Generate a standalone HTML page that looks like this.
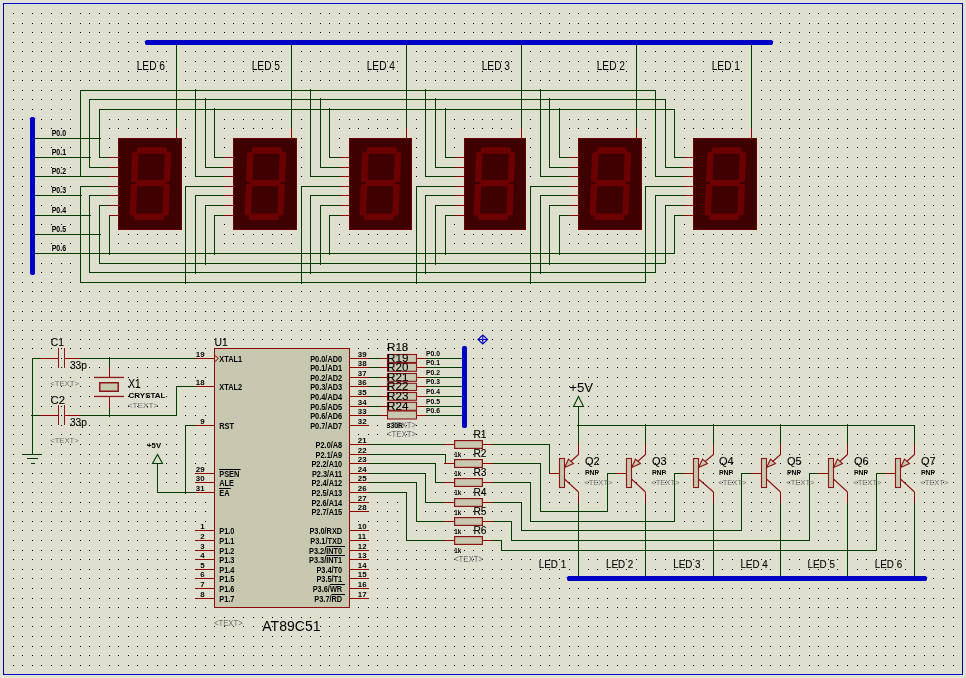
<!DOCTYPE html><html><head><meta charset="utf-8"><style>
html,body{margin:0;padding:0;background:#e2e2d6;overflow:hidden}
svg{display:block;font-family:"Liberation Sans",sans-serif;will-change:transform}
</style></head><body>
<svg width="966" height="678" viewBox="0 0 966 678">
<rect x="0" y="0" width="966" height="678" fill="#e2e2d6"/>
<rect x="4" y="4" width="958" height="670" fill="#dfdfd0"/>
<defs><path id="dr" d="M13 .5h1m8 0h1m9 0h1m8 0h1m9 0h1m9 0h1m8 0h1m9 0h1m8 0h1m9 0h1m9 0h1m8 0h1m9 0h1m8 0h1m9 0h1m9 0h1m8 0h1m9 0h1m8 0h1m9 0h1m9 0h1m8 0h1m9 0h1m8 0h1m9 0h1m9 0h1m8 0h1m9 0h1m8 0h1m9 0h1m9 0h1m8 0h1m9 0h1m8 0h1m9 0h1m9 0h1m8 0h1m9 0h1m8 0h1m9 0h1m9 0h1m8 0h1m9 0h1m8 0h1m9 0h1m9 0h1m8 0h1m9 0h1m8 0h1m8 0h1m9 0h1m8 0h1m9 0h1m9 0h1m8 0h1m9 0h1m8 0h1m9 0h1m9 0h1m8 0h1m9 0h1m8 0h1m9 0h1m9 0h1m8 0h1m9 0h1m8 0h1m9 0h1m9 0h1m8 0h1m9 0h1m8 0h1m9 0h1m9 0h1m8 0h1m9 0h1m8 0h1m9 0h1m9 0h1m8 0h1m9 0h1m8 0h1m9 0h1m9 0h1m8 0h1m9 0h1m8 0h1m9 0h1m9 0h1m8 0h1m9 0h1m8 0h1m9 0h1m9 0h1m8 0h1m9 0h1m8 0h1m9 0h1m9 0h1" stroke="#000" stroke-width="1" fill="none"/></defs><g shape-rendering="crispEdges"><use href="#dr" y="13"/><use href="#dr" y="23"/><use href="#dr" y="32"/><use href="#dr" y="42"/><use href="#dr" y="51"/><use href="#dr" y="61"/><use href="#dr" y="71"/><use href="#dr" y="80"/><use href="#dr" y="90"/><use href="#dr" y="99"/><use href="#dr" y="109"/><use href="#dr" y="119"/><use href="#dr" y="128"/><use href="#dr" y="138"/><use href="#dr" y="147"/><use href="#dr" y="157"/><use href="#dr" y="167"/><use href="#dr" y="176"/><use href="#dr" y="186"/><use href="#dr" y="195"/><use href="#dr" y="205"/><use href="#dr" y="215"/><use href="#dr" y="224"/><use href="#dr" y="234"/><use href="#dr" y="243"/><use href="#dr" y="253"/><use href="#dr" y="263"/><use href="#dr" y="272"/><use href="#dr" y="282"/><use href="#dr" y="291"/><use href="#dr" y="301"/><use href="#dr" y="311"/><use href="#dr" y="320"/><use href="#dr" y="330"/><use href="#dr" y="339"/><use href="#dr" y="348"/><use href="#dr" y="358"/><use href="#dr" y="367"/><use href="#dr" y="377"/><use href="#dr" y="386"/><use href="#dr" y="396"/><use href="#dr" y="406"/><use href="#dr" y="415"/><use href="#dr" y="425"/><use href="#dr" y="434"/><use href="#dr" y="444"/><use href="#dr" y="454"/><use href="#dr" y="463"/><use href="#dr" y="473"/><use href="#dr" y="482"/><use href="#dr" y="492"/><use href="#dr" y="502"/><use href="#dr" y="511"/><use href="#dr" y="521"/><use href="#dr" y="530"/><use href="#dr" y="540"/><use href="#dr" y="550"/><use href="#dr" y="559"/><use href="#dr" y="569"/><use href="#dr" y="578"/><use href="#dr" y="588"/><use href="#dr" y="598"/><use href="#dr" y="607"/><use href="#dr" y="617"/><use href="#dr" y="626"/><use href="#dr" y="636"/><use href="#dr" y="646"/><use href="#dr" y="655"/><use href="#dr" y="665"/></g>
<g shape-rendering="crispEdges"><rect x="3" y="3" width="960" height="1" fill="#0000c8"/><rect x="3" y="674" width="960" height="1" fill="#0000c8"/><rect x="3" y="3" width="1" height="672" fill="#000098"/><rect x="962" y="3" width="1" height="672" fill="#000098"/></g>
<path d="M80 90.5H656M89 99.5H666M99 109.5H675M34 253.5H675M99 263.5H666M89 272.5H656M80 282.5H646M34 138.5H101M34 157.5H91M34 176.5H110M34 195.5H82M34 215.5H91M34 234.5H101M176.5 45V128M99.5 109V158M99 157.5H109M89.5 99V168M89 167.5H109M80.5 90V177M80.5 186V283M80 186.5H109M89.5 195V273M89 195.5H109M99.5 205V264M99 205.5H109M109.5 215V255M291.5 45V128M195.5 89V177M195 176.5H224M205.5 98V168M205 167.5H224M214.5 108V158M214 157.5H224M185.5 186V284M185 186.5H224M195.5 195V274M195 195.5H224M205.5 205V265M205 205.5H224M214.5 215V255M214 215.5H224M406.5 45V128M310.5 89V177M310 176.5H340M320.5 98V168M320 167.5H340M329.5 108V158M329 157.5H340M301.5 186V284M301 186.5H340M310.5 195V274M310 195.5H340M320.5 205V265M320 205.5H340M329.5 215V255M329 215.5H340M521.5 45V128M425.5 89V177M425 176.5H455M435.5 98V168M435 167.5H455M445.5 108V158M445 157.5H455M416.5 186V284M416 186.5H455M425.5 195V274M425 195.5H455M435.5 205V265M435 205.5H455M445.5 215V255M445 215.5H455M636.5 45V128M540.5 89V177M540 176.5H569M549.5 98V168M549 167.5H569M559.5 108V158M559 157.5H569M530.5 186V284M530 186.5H569M540.5 195V274M540 195.5H569M549.5 205V265M549 205.5H569M559.5 215V255M559 215.5H569M751.5 45V128M655.5 90V177M655 176.5H684M665.5 99V168M665 167.5H684M674.5 109V158M674 157.5H684M645.5 186V283M645 186.5H684M655.5 195V273M655 195.5H684M665.5 205V264M665 205.5H684M674.5 215V254M674 215.5H684M32.5 358V455M22 454.5H42M27 458.5H38M31 463.5H35M32 358.5H40M31 415.5H40M80 358.5H196M80 415.5H177M176.5 386V416M176 386.5H196M109.5 357V367M109.5 408V417M157.5 463V493M157 492.5H196M185 425.5H196M185.5 425V494M369 358.5H380M426 358.5H464M369 367.5H380M426 367.5H464M369 377.5H380M426 377.5H464M369 386.5H380M426 386.5H464M369 396.5H380M426 396.5H464M369 406.5H380M426 406.5H464M369 415.5H380M426 415.5H464M369 444.5H444M369 454.5H446M445.5 454V464M369 463.5H436M435.5 463V483M435 482.5H444M369 473.5H426M425.5 473V503M425 502.5H444M369 482.5H417M416.5 482V522M416 521.5H444M369 492.5H407M406.5 492V541M406 540.5H444M493 444.5H550M549.5 444V474M493 463.5H541M540.5 463V512M540 511.5H608M607.5 473V512M493 482.5H531M530.5 482V522M530 521.5H675M674.5 473V522M493 502.5H522M521.5 502V531M521 530.5H742M741.5 473V531M493 521.5H512M511.5 521V541M511 540.5H810M809.5 473V541M493 540.5H502M501.5 540V551M501 550.5H877M876.5 473V551M578.5 425V444M578.5 503V577M607 473.5H616M645.5 424V444M645.5 503V577M674 473.5H683M713.5 424V444M713.5 503V577M741 473.5H751M780.5 424V444M780.5 503V577M809 473.5H818M847.5 424V444M847.5 503V577M876 473.5H885M914.5 425V444M914.5 503V577M577 425.5H915M578.5 406V426" stroke="#003c00" stroke-width="1" fill="none" shape-rendering="crispEdges"/>
<path d="M109 157.5H118M109 167.5H118M109 176.5H118M109 186.5H118M109 195.5H118M109 205.5H118M109 215.5H118M176.5 128V138M224 157.5H233M224 167.5H233M224 176.5H233M224 186.5H233M224 195.5H233M224 205.5H233M224 215.5H233M291.5 128V138M340 157.5H349M340 167.5H349M340 176.5H349M340 186.5H349M340 195.5H349M340 205.5H349M340 215.5H349M406.5 128V138M455 157.5H464M455 167.5H464M455 176.5H464M455 186.5H464M455 195.5H464M455 205.5H464M455 215.5H464M521.5 128V138M569 157.5H578M569 167.5H578M569 176.5H578M569 186.5H578M569 195.5H578M569 205.5H578M569 215.5H578M636.5 128V138M684 157.5H693M684 167.5H693M684 176.5H693M684 186.5H693M684 195.5H693M684 205.5H693M684 215.5H693M751.5 128V138M40 358.5H58M65 358.5H80M40 415.5H58M65 415.5H80M109.5 367V377M109.5 397V408M195 358.5H214M195 386.5H214M195 425.5H214M195 473.5H214M195 482.5H214M195 492.5H214M195 530.5H214M195 540.5H214M195 550.5H214M195 559.5H214M195 569.5H214M195 578.5H214M195 588.5H214M195 598.5H214M350 358.5H369M350 367.5H369M350 377.5H369M350 386.5H369M350 396.5H369M350 406.5H369M350 415.5H369M350 425.5H369M350 444.5H369M350 454.5H369M350 463.5H369M350 473.5H369M350 482.5H369M350 492.5H369M350 502.5H369M350 511.5H369M350 530.5H369M350 540.5H369M350 550.5H369M350 559.5H369M350 569.5H369M350 578.5H369M350 588.5H369M350 598.5H369M380 358.5H387M417 358.5H426M380 367.5H387M417 367.5H426M380 377.5H387M417 377.5H426M380 386.5H387M417 386.5H426M380 396.5H387M417 396.5H426M380 406.5H387M417 406.5H426M380 415.5H387M417 415.5H426M444 444.5H454M483 444.5H493M444 463.5H454M483 463.5H493M444 482.5H454M483 482.5H493M444 502.5H454M483 502.5H493M444 521.5H454M483 521.5H493M444 540.5H454M483 540.5H493M350 502.5H369M350 511.5H369M549 473.5H559M578.5 444V455M578.5 492V503M616 473.5H626M645.5 444V455M645.5 492V503M683 473.5H693M713.5 444V455M713.5 492V503M751 473.5H761M780.5 444V455M780.5 492V503M818 473.5H828M847.5 444V455M847.5 492V503M885 473.5H895M914.5 444V455M914.5 492V503" stroke="#900000" stroke-width="1" fill="none" shape-rendering="crispEdges"/>
<path d="M58.5 348V368M64.5 348V368M58.5 405V425M64.5 405V425" stroke="#8c1414" stroke-width="1" fill="none" shape-rendering="crispEdges"/>
<rect x="118.5" y="138.5" width="63" height="91" fill="#3e0000" stroke="#680000" stroke-width="1"/><g transform="translate(150.2,183.75) skewX(-2.4) translate(-150.2,-183.75)" fill="#6c0000"><rect x="135.50" y="147.30" width="29.80" height="6.40" rx="1.8"/><rect x="135.50" y="179.80" width="29.80" height="6.50" rx="1.8"/><rect x="135.50" y="213.60" width="29.80" height="6.40" rx="1.8"/><rect x="130.90" y="151.90" width="6.40" height="30.10" rx="1.8"/><rect x="163.50" y="151.90" width="6.40" height="30.10" rx="1.8"/><rect x="130.90" y="184.10" width="6.40" height="31.30" rx="1.8"/><rect x="163.50" y="184.10" width="6.40" height="31.30" rx="1.8"/></g><rect x="233.5" y="138.5" width="63" height="91" fill="#3e0000" stroke="#680000" stroke-width="1"/><g transform="translate(265.2,183.75) skewX(-2.4) translate(-265.2,-183.75)" fill="#6c0000"><rect x="250.50" y="147.30" width="29.80" height="6.40" rx="1.8"/><rect x="250.50" y="179.80" width="29.80" height="6.50" rx="1.8"/><rect x="250.50" y="213.60" width="29.80" height="6.40" rx="1.8"/><rect x="245.90" y="151.90" width="6.40" height="30.10" rx="1.8"/><rect x="278.50" y="151.90" width="6.40" height="30.10" rx="1.8"/><rect x="245.90" y="184.10" width="6.40" height="31.30" rx="1.8"/><rect x="278.50" y="184.10" width="6.40" height="31.30" rx="1.8"/></g><rect x="349.5" y="138.5" width="62" height="91" fill="#3e0000" stroke="#680000" stroke-width="1"/><g transform="translate(380.2,183.75) skewX(-2.4) translate(-380.2,-183.75)" fill="#6c0000"><rect x="365.50" y="147.30" width="29.80" height="6.40" rx="1.8"/><rect x="365.50" y="179.80" width="29.80" height="6.50" rx="1.8"/><rect x="365.50" y="213.60" width="29.80" height="6.40" rx="1.8"/><rect x="360.90" y="151.90" width="6.40" height="30.10" rx="1.8"/><rect x="393.50" y="151.90" width="6.40" height="30.10" rx="1.8"/><rect x="360.90" y="184.10" width="6.40" height="31.30" rx="1.8"/><rect x="393.50" y="184.10" width="6.40" height="31.30" rx="1.8"/></g><rect x="464.5" y="138.5" width="61" height="91" fill="#3e0000" stroke="#680000" stroke-width="1"/><g transform="translate(494.2,183.75) skewX(-2.4) translate(-494.2,-183.75)" fill="#6c0000"><rect x="479.50" y="147.30" width="29.80" height="6.40" rx="1.8"/><rect x="479.50" y="179.80" width="29.80" height="6.50" rx="1.8"/><rect x="479.50" y="213.60" width="29.80" height="6.40" rx="1.8"/><rect x="474.90" y="151.90" width="6.40" height="30.10" rx="1.8"/><rect x="507.50" y="151.90" width="6.40" height="30.10" rx="1.8"/><rect x="474.90" y="184.10" width="6.40" height="31.30" rx="1.8"/><rect x="507.50" y="184.10" width="6.40" height="31.30" rx="1.8"/></g><rect x="578.5" y="138.5" width="63" height="91" fill="#3e0000" stroke="#680000" stroke-width="1"/><g transform="translate(610.2,183.75) skewX(-2.4) translate(-610.2,-183.75)" fill="#6c0000"><rect x="595.50" y="147.30" width="29.80" height="6.40" rx="1.8"/><rect x="595.50" y="179.80" width="29.80" height="6.50" rx="1.8"/><rect x="595.50" y="213.60" width="29.80" height="6.40" rx="1.8"/><rect x="590.90" y="151.90" width="6.40" height="30.10" rx="1.8"/><rect x="623.50" y="151.90" width="6.40" height="30.10" rx="1.8"/><rect x="590.90" y="184.10" width="6.40" height="31.30" rx="1.8"/><rect x="623.50" y="184.10" width="6.40" height="31.30" rx="1.8"/></g><rect x="693.5" y="138.5" width="63" height="91" fill="#3e0000" stroke="#680000" stroke-width="1"/><g transform="translate(725.2,183.75) skewX(-2.4) translate(-725.2,-183.75)" fill="#6c0000"><rect x="710.50" y="147.30" width="29.80" height="6.40" rx="1.8"/><rect x="710.50" y="179.80" width="29.80" height="6.50" rx="1.8"/><rect x="710.50" y="213.60" width="29.80" height="6.40" rx="1.8"/><rect x="705.90" y="151.90" width="6.40" height="30.10" rx="1.8"/><rect x="738.50" y="151.90" width="6.40" height="30.10" rx="1.8"/><rect x="705.90" y="184.10" width="6.40" height="31.30" rx="1.8"/><rect x="738.50" y="184.10" width="6.40" height="31.30" rx="1.8"/></g><path d="M145 41.2L146.2 40H771.8L773 41.2V43.8L771.8 45H146.2L145 43.8Z" fill="#0000c4"/><path d="M31.2 117L30 118.2V273.8L31.2 275H33.8L35 273.8V118.2L33.8 117Z" fill="#0000c4"/><text x="136.70" y="69.9" font-size="12.29" fill="#000" textLength="28.34" lengthAdjust="spacingAndGlyphs" >LED 6</text><text x="251.70" y="69.9" font-size="12.29" fill="#000" textLength="28.34" lengthAdjust="spacingAndGlyphs" >LED 5</text><text x="366.70" y="69.9" font-size="12.29" fill="#000" textLength="28.34" lengthAdjust="spacingAndGlyphs" >LED 4</text><text x="481.70" y="69.9" font-size="12.29" fill="#000" textLength="28.34" lengthAdjust="spacingAndGlyphs" >LED 3</text><text x="596.70" y="69.9" font-size="12.29" fill="#000" textLength="28.34" lengthAdjust="spacingAndGlyphs" >LED 2</text><text x="711.70" y="69.9" font-size="12.29" fill="#000" textLength="28.34" lengthAdjust="spacingAndGlyphs" >LED 1</text><text x="51.70" y="135.5" font-size="8.43" fill="#000" font-weight="bold" textLength="14.38" lengthAdjust="spacingAndGlyphs" >P0.0</text><text x="51.70" y="154.5" font-size="8.43" fill="#000" font-weight="bold" textLength="14.38" lengthAdjust="spacingAndGlyphs" >P0.1</text><text x="51.70" y="173.5" font-size="8.43" fill="#000" font-weight="bold" textLength="14.38" lengthAdjust="spacingAndGlyphs" >P0.2</text><text x="51.70" y="192.5" font-size="8.43" fill="#000" font-weight="bold" textLength="14.38" lengthAdjust="spacingAndGlyphs" >P0.3</text><text x="51.70" y="212.5" font-size="8.43" fill="#000" font-weight="bold" textLength="14.38" lengthAdjust="spacingAndGlyphs" >P0.4</text><text x="51.70" y="231.5" font-size="8.43" fill="#000" font-weight="bold" textLength="14.38" lengthAdjust="spacingAndGlyphs" >P0.5</text><text x="51.70" y="250.5" font-size="8.43" fill="#000" font-weight="bold" textLength="14.38" lengthAdjust="spacingAndGlyphs" >P0.6</text><text x="50.70" y="345.8" font-size="11.43" fill="#000" stroke="#000" stroke-width="0.1" textLength="13.18" lengthAdjust="spacingAndGlyphs" >C1</text><text x="50.50" y="403.6" font-size="11.29" fill="#000" stroke="#000" stroke-width="0.1" textLength="14.48" lengthAdjust="spacingAndGlyphs" >C2</text><text x="69.90" y="368.7" font-size="10.86" fill="#000" stroke="#000" stroke-width="0.1" textLength="16.98" lengthAdjust="spacingAndGlyphs" >33p</text><text x="69.90" y="426.0" font-size="10.86" fill="#000" stroke="#000" stroke-width="0.1" textLength="16.98" lengthAdjust="spacingAndGlyphs" >33p</text><text x="50.20" y="385.9" font-size="8.00" fill="#6e6e6e" textLength="28.83" lengthAdjust="spacingAndGlyphs" >&lt;TEXT&gt;</text><text x="50.20" y="442.9" font-size="8.00" fill="#6e6e6e" textLength="28.53" lengthAdjust="spacingAndGlyphs" >&lt;TEXT&gt;</text><rect x="94" y="376.8" width="30" height="1.3" fill="#8c1414"/><rect x="94" y="395.8" width="30" height="1.3" fill="#8c1414"/><rect x="99.75" y="382.75" width="18.5" height="8.5" fill="#c8c8b0" stroke="#8c1414" stroke-width="1.5"/><text x="128.30" y="387.7" font-size="11.86" fill="#000" stroke="#000" stroke-width="0.1" textLength="12.43" lengthAdjust="spacingAndGlyphs" >X1</text><text x="128.50" y="397.8" font-size="7.71" fill="#000" font-weight="bold" textLength="37.01" lengthAdjust="spacingAndGlyphs" >CRYSTAL</text><text x="127.80" y="408" font-size="8.00" fill="#6e6e6e" textLength="30.53" lengthAdjust="spacingAndGlyphs" >&lt;TEXT&gt;</text><path d="M157.5 454.5L152.5 463.5H162.5Z" fill="none" stroke="#003c00" stroke-width="1.1"/><text x="147.10" y="447.9" font-size="6.86" fill="#000" font-weight="bold" textLength="13.98" lengthAdjust="spacingAndGlyphs" >+5V</text><rect x="214.5" y="348.5" width="135" height="259" fill="#c8c8b0" stroke="#8a0a0a" stroke-width="1" shape-rendering="crispEdges"/><text x="214.50" y="345.6" font-size="10.86" fill="#000" stroke="#000" stroke-width="0.1" textLength="13.28" lengthAdjust="spacingAndGlyphs" >U1</text><text x="195.87" y="356.5" font-size="7.29" fill="#000" font-weight="bold" textLength="8.75" lengthAdjust="spacingAndGlyphs" >19</text><text x="219.30" y="362" font-size="8.57" fill="#000" font-weight="bold" textLength="22.80" lengthAdjust="spacingAndGlyphs" >XTAL1</text><text x="195.87" y="384.5" font-size="7.29" fill="#000" font-weight="bold" textLength="8.75" lengthAdjust="spacingAndGlyphs" >18</text><text x="219.30" y="390" font-size="8.57" fill="#000" font-weight="bold" textLength="22.80" lengthAdjust="spacingAndGlyphs" >XTAL2</text><text x="200.19" y="423.5" font-size="7.29" fill="#000" font-weight="bold" textLength="4.38" lengthAdjust="spacingAndGlyphs" >9</text><text x="219.30" y="429" font-size="8.57" fill="#000" font-weight="bold" textLength="14.74" lengthAdjust="spacingAndGlyphs" >RST</text><text x="195.87" y="471.5" font-size="7.29" fill="#000" font-weight="bold" textLength="8.75" lengthAdjust="spacingAndGlyphs" >29</text><text x="219.30" y="477" font-size="8.57" fill="#000" font-weight="bold" textLength="20.07" lengthAdjust="spacingAndGlyphs" >PSEN</text><rect x="219" y="469" width="21.6" height="1" fill="#000"/><text x="195.87" y="480.5" font-size="7.29" fill="#000" font-weight="bold" textLength="8.75" lengthAdjust="spacingAndGlyphs" >30</text><text x="219.30" y="486" font-size="8.57" fill="#000" font-weight="bold" textLength="14.74" lengthAdjust="spacingAndGlyphs" >ALE</text><text x="195.87" y="490.5" font-size="7.29" fill="#000" font-weight="bold" textLength="8.75" lengthAdjust="spacingAndGlyphs" >31</text><text x="219.30" y="496" font-size="8.57" fill="#000" font-weight="bold" textLength="10.24" lengthAdjust="spacingAndGlyphs" >EA</text><rect x="219" y="488" width="11.7" height="1" fill="#000"/><text x="200.19" y="528.5" font-size="7.29" fill="#000" font-weight="bold" textLength="4.38" lengthAdjust="spacingAndGlyphs" >1</text><text x="219.30" y="534" font-size="8.57" fill="#000" font-weight="bold" textLength="15.16" lengthAdjust="spacingAndGlyphs" >P1.0</text><text x="200.19" y="538.5" font-size="7.29" fill="#000" font-weight="bold" textLength="4.38" lengthAdjust="spacingAndGlyphs" >2</text><text x="219.30" y="544" font-size="8.57" fill="#000" font-weight="bold" textLength="15.16" lengthAdjust="spacingAndGlyphs" >P1.1</text><text x="200.19" y="548.5" font-size="7.29" fill="#000" font-weight="bold" textLength="4.38" lengthAdjust="spacingAndGlyphs" >3</text><text x="219.30" y="554" font-size="8.57" fill="#000" font-weight="bold" textLength="15.16" lengthAdjust="spacingAndGlyphs" >P1.2</text><text x="200.19" y="557.5" font-size="7.29" fill="#000" font-weight="bold" textLength="4.38" lengthAdjust="spacingAndGlyphs" >4</text><text x="219.30" y="563" font-size="8.57" fill="#000" font-weight="bold" textLength="15.16" lengthAdjust="spacingAndGlyphs" >P1.3</text><text x="200.19" y="567.5" font-size="7.29" fill="#000" font-weight="bold" textLength="4.38" lengthAdjust="spacingAndGlyphs" >5</text><text x="219.30" y="573" font-size="8.57" fill="#000" font-weight="bold" textLength="15.16" lengthAdjust="spacingAndGlyphs" >P1.4</text><text x="200.19" y="576.5" font-size="7.29" fill="#000" font-weight="bold" textLength="4.38" lengthAdjust="spacingAndGlyphs" >6</text><text x="219.30" y="582" font-size="8.57" fill="#000" font-weight="bold" textLength="15.16" lengthAdjust="spacingAndGlyphs" >P1.5</text><text x="200.19" y="586.5" font-size="7.29" fill="#000" font-weight="bold" textLength="4.38" lengthAdjust="spacingAndGlyphs" >7</text><text x="219.30" y="592" font-size="8.57" fill="#000" font-weight="bold" textLength="15.16" lengthAdjust="spacingAndGlyphs" >P1.6</text><text x="200.19" y="596.5" font-size="7.29" fill="#000" font-weight="bold" textLength="4.38" lengthAdjust="spacingAndGlyphs" >8</text><text x="219.30" y="602" font-size="8.57" fill="#000" font-weight="bold" textLength="15.16" lengthAdjust="spacingAndGlyphs" >P1.7</text><path d="M215 355.5L218.5 358.5L215 361.5" fill="none" stroke="#900000" stroke-width="1"/><text x="357.80" y="356.5" font-size="7.29" fill="#000" font-weight="bold" textLength="8.75" lengthAdjust="spacingAndGlyphs" >39</text><text x="310.21" y="362" font-size="8.57" fill="#000" font-weight="bold" textLength="31.96" lengthAdjust="spacingAndGlyphs" >P0.0/AD0</text><text x="357.80" y="365.5" font-size="7.29" fill="#000" font-weight="bold" textLength="8.75" lengthAdjust="spacingAndGlyphs" >38</text><text x="310.21" y="371" font-size="8.57" fill="#000" font-weight="bold" textLength="31.96" lengthAdjust="spacingAndGlyphs" >P0.1/AD1</text><text x="357.80" y="375.5" font-size="7.29" fill="#000" font-weight="bold" textLength="8.75" lengthAdjust="spacingAndGlyphs" >37</text><text x="310.21" y="381" font-size="8.57" fill="#000" font-weight="bold" textLength="31.96" lengthAdjust="spacingAndGlyphs" >P0.2/AD2</text><text x="357.80" y="384.5" font-size="7.29" fill="#000" font-weight="bold" textLength="8.75" lengthAdjust="spacingAndGlyphs" >36</text><text x="310.21" y="390" font-size="8.57" fill="#000" font-weight="bold" textLength="31.96" lengthAdjust="spacingAndGlyphs" >P0.3/AD3</text><text x="357.80" y="394.5" font-size="7.29" fill="#000" font-weight="bold" textLength="8.75" lengthAdjust="spacingAndGlyphs" >35</text><text x="310.21" y="400" font-size="8.57" fill="#000" font-weight="bold" textLength="31.96" lengthAdjust="spacingAndGlyphs" >P0.4/AD4</text><text x="357.80" y="404.5" font-size="7.29" fill="#000" font-weight="bold" textLength="8.75" lengthAdjust="spacingAndGlyphs" >34</text><text x="310.21" y="410" font-size="8.57" fill="#000" font-weight="bold" textLength="31.96" lengthAdjust="spacingAndGlyphs" >P0.5/AD5</text><text x="357.80" y="413.5" font-size="7.29" fill="#000" font-weight="bold" textLength="8.75" lengthAdjust="spacingAndGlyphs" >33</text><text x="310.21" y="419" font-size="8.57" fill="#000" font-weight="bold" textLength="31.96" lengthAdjust="spacingAndGlyphs" >P0.6/AD6</text><text x="357.80" y="423.5" font-size="7.29" fill="#000" font-weight="bold" textLength="8.75" lengthAdjust="spacingAndGlyphs" >32</text><text x="310.21" y="429" font-size="8.57" fill="#000" font-weight="bold" textLength="31.96" lengthAdjust="spacingAndGlyphs" >P0.7/AD7</text><text x="357.80" y="442.5" font-size="7.29" fill="#000" font-weight="bold" textLength="8.75" lengthAdjust="spacingAndGlyphs" >21</text><text x="315.59" y="448" font-size="8.57" fill="#000" font-weight="bold" textLength="26.63" lengthAdjust="spacingAndGlyphs" >P2.0/A8</text><text x="357.80" y="452.5" font-size="7.29" fill="#000" font-weight="bold" textLength="8.75" lengthAdjust="spacingAndGlyphs" >22</text><text x="315.59" y="458" font-size="8.57" fill="#000" font-weight="bold" textLength="26.63" lengthAdjust="spacingAndGlyphs" >P2.1/A9</text><text x="357.80" y="461.5" font-size="7.29" fill="#000" font-weight="bold" textLength="8.75" lengthAdjust="spacingAndGlyphs" >23</text><text x="311.46" y="467" font-size="8.57" fill="#000" font-weight="bold" textLength="30.73" lengthAdjust="spacingAndGlyphs" >P2.2/A10</text><text x="357.80" y="471.5" font-size="7.29" fill="#000" font-weight="bold" textLength="8.75" lengthAdjust="spacingAndGlyphs" >24</text><text x="311.90" y="477" font-size="8.57" fill="#000" font-weight="bold" textLength="30.33" lengthAdjust="spacingAndGlyphs" >P2.3/A11</text><text x="357.80" y="480.5" font-size="7.29" fill="#000" font-weight="bold" textLength="8.75" lengthAdjust="spacingAndGlyphs" >25</text><text x="311.46" y="486" font-size="8.57" fill="#000" font-weight="bold" textLength="30.73" lengthAdjust="spacingAndGlyphs" >P2.4/A12</text><text x="357.80" y="490.5" font-size="7.29" fill="#000" font-weight="bold" textLength="8.75" lengthAdjust="spacingAndGlyphs" >26</text><text x="311.46" y="496" font-size="8.57" fill="#000" font-weight="bold" textLength="30.73" lengthAdjust="spacingAndGlyphs" >P2.5/A13</text><text x="357.80" y="500.5" font-size="7.29" fill="#000" font-weight="bold" textLength="8.75" lengthAdjust="spacingAndGlyphs" >27</text><text x="311.46" y="506" font-size="8.57" fill="#000" font-weight="bold" textLength="30.73" lengthAdjust="spacingAndGlyphs" >P2.6/A14</text><text x="357.80" y="509.5" font-size="7.29" fill="#000" font-weight="bold" textLength="8.75" lengthAdjust="spacingAndGlyphs" >28</text><text x="311.46" y="515" font-size="8.57" fill="#000" font-weight="bold" textLength="30.73" lengthAdjust="spacingAndGlyphs" >P2.7/A15</text><text x="357.80" y="528.5" font-size="7.29" fill="#000" font-weight="bold" textLength="8.75" lengthAdjust="spacingAndGlyphs" >10</text><text x="309.40" y="534" font-size="8.57" fill="#000" font-weight="bold" textLength="32.78" lengthAdjust="spacingAndGlyphs" >P3.0/RXD</text><text x="357.80" y="538.5" font-size="7.29" fill="#000" font-weight="bold" textLength="8.32" lengthAdjust="spacingAndGlyphs" >11</text><text x="310.28" y="544" font-size="8.57" fill="#000" font-weight="bold" textLength="31.95" lengthAdjust="spacingAndGlyphs" >P3.1/TXD</text><text x="357.80" y="548.5" font-size="7.29" fill="#000" font-weight="bold" textLength="8.75" lengthAdjust="spacingAndGlyphs" >12</text><text x="309.03" y="554" font-size="8.57" fill="#000" font-weight="bold" textLength="33.18" lengthAdjust="spacingAndGlyphs" >P3.2/INT0</text><text x="357.80" y="557.5" font-size="7.29" fill="#000" font-weight="bold" textLength="8.75" lengthAdjust="spacingAndGlyphs" >13</text><text x="309.03" y="563" font-size="8.57" fill="#000" font-weight="bold" textLength="33.18" lengthAdjust="spacingAndGlyphs" >P3.3/INT1</text><text x="357.80" y="567.5" font-size="7.29" fill="#000" font-weight="bold" textLength="8.75" lengthAdjust="spacingAndGlyphs" >14</text><text x="316.40" y="573" font-size="8.57" fill="#000" font-weight="bold" textLength="25.81" lengthAdjust="spacingAndGlyphs" >P3.4/T0</text><text x="357.80" y="576.5" font-size="7.29" fill="#000" font-weight="bold" textLength="8.75" lengthAdjust="spacingAndGlyphs" >15</text><text x="316.40" y="582" font-size="8.57" fill="#000" font-weight="bold" textLength="25.81" lengthAdjust="spacingAndGlyphs" >P3.5/T1</text><text x="357.80" y="586.5" font-size="7.29" fill="#000" font-weight="bold" textLength="8.75" lengthAdjust="spacingAndGlyphs" >16</text><text x="312.71" y="592" font-size="8.57" fill="#000" font-weight="bold" textLength="29.49" lengthAdjust="spacingAndGlyphs" >P3.6/WR</text><text x="357.80" y="596.5" font-size="7.29" fill="#000" font-weight="bold" textLength="8.75" lengthAdjust="spacingAndGlyphs" >17</text><text x="314.34" y="602" font-size="8.57" fill="#000" font-weight="bold" textLength="27.86" lengthAdjust="spacingAndGlyphs" >P3.7/RD</text><rect x="326.2" y="546" width="18.8" height="1" fill="#000"/><rect x="326.2" y="555" width="18.8" height="1" fill="#000"/><rect x="329.9" y="584" width="15.1" height="1" fill="#000"/><rect x="331.6" y="594" width="13.4" height="1" fill="#000"/><text x="213.90" y="626" font-size="8.57" fill="#6e6e6e" textLength="28.83" lengthAdjust="spacingAndGlyphs" >&lt;TEXT&gt;</text><text x="262.30" y="630.6" font-size="14.43" fill="#000" textLength="58.20" lengthAdjust="spacingAndGlyphs" >AT89C51</text><rect x="387.5" y="354.5" width="29" height="8.0" fill="#c8c8b0" stroke="#8c1414" stroke-width="1.1"/><rect x="387.5" y="363.3" width="29" height="8.0" fill="#c8c8b0" stroke="#8c1414" stroke-width="1.1"/><rect x="387.5" y="373.5" width="29" height="7.8" fill="#c8c8b0" stroke="#8c1414" stroke-width="1.1"/><rect x="387.5" y="383.3" width="29" height="7.2" fill="#c8c8b0" stroke="#8c1414" stroke-width="1.1"/><rect x="387.5" y="392.5" width="29" height="7.8" fill="#c8c8b0" stroke="#8c1414" stroke-width="1.1"/><rect x="387.5" y="402.3" width="29" height="8.0" fill="#c8c8b0" stroke="#8c1414" stroke-width="1.1"/><rect x="387.5" y="411" width="29" height="8.0" fill="#c8c8b0" stroke="#8c1414" stroke-width="1.1"/><text x="387.00" y="351.3" font-size="11.14" fill="#000" stroke="#000" stroke-width="0.1" textLength="21.35" lengthAdjust="spacingAndGlyphs" >R18</text><text x="387.00" y="361.5" font-size="10.86" fill="#000" stroke="#000" stroke-width="0.1" textLength="21.35" lengthAdjust="spacingAndGlyphs" >R19</text><text x="387.00" y="371.15" font-size="10.86" fill="#000" stroke="#000" stroke-width="0.1" textLength="21.35" lengthAdjust="spacingAndGlyphs" >R20</text><text x="387.00" y="380.8" font-size="10.86" fill="#000" stroke="#000" stroke-width="0.1" textLength="21.35" lengthAdjust="spacingAndGlyphs" >R21</text><text x="387.00" y="390.45" font-size="10.86" fill="#000" stroke="#000" stroke-width="0.1" textLength="21.35" lengthAdjust="spacingAndGlyphs" >R22</text><text x="387.00" y="400.1" font-size="10.86" fill="#000" stroke="#000" stroke-width="0.1" textLength="21.35" lengthAdjust="spacingAndGlyphs" >R23</text><text x="387.00" y="409.75" font-size="10.86" fill="#000" stroke="#000" stroke-width="0.1" textLength="21.35" lengthAdjust="spacingAndGlyphs" >R24</text><text x="426.10" y="355.8" font-size="7.14" fill="#000" font-weight="bold" textLength="13.88" lengthAdjust="spacingAndGlyphs" >P0.0</text><text x="426.10" y="364.8" font-size="7.14" fill="#000" font-weight="bold" textLength="13.88" lengthAdjust="spacingAndGlyphs" >P0.1</text><text x="426.10" y="374.8" font-size="7.14" fill="#000" font-weight="bold" textLength="13.88" lengthAdjust="spacingAndGlyphs" >P0.2</text><text x="426.10" y="383.8" font-size="7.14" fill="#000" font-weight="bold" textLength="13.88" lengthAdjust="spacingAndGlyphs" >P0.3</text><text x="426.10" y="393.8" font-size="7.14" fill="#000" font-weight="bold" textLength="13.88" lengthAdjust="spacingAndGlyphs" >P0.4</text><text x="426.10" y="403.8" font-size="7.14" fill="#000" font-weight="bold" textLength="13.88" lengthAdjust="spacingAndGlyphs" >P0.5</text><text x="426.10" y="412.8" font-size="7.14" fill="#000" font-weight="bold" textLength="13.88" lengthAdjust="spacingAndGlyphs" >P0.6</text><text x="387.00" y="428" font-size="8.57" fill="#6e6e6e" textLength="29.03" lengthAdjust="spacingAndGlyphs" >&lt;TEXT&gt;</text><text x="386.60" y="427.8" font-size="6.86" fill="#000" font-weight="bold" textLength="16.30" lengthAdjust="spacingAndGlyphs" >330R</text><text x="387.00" y="437" font-size="8.57" fill="#6e6e6e" textLength="29.03" lengthAdjust="spacingAndGlyphs" >&lt;TEXT&gt;</text><path d="M463.2 346L462 347.2V426.8L463.2 428H465.8L467 426.8V347.2L465.8 346Z" fill="#0000c4"/><g stroke="#0000c4" fill="none" stroke-width="1.1"><path d="M482.8 335L487.5 339.5L482.8 344L478 339.5Z"/><path d="M478 339.5H487.5M482.8 335V344"/></g><rect x="454.6" y="440.6" width="27.8" height="7.8" fill="#c8c8b0" stroke="#8c1414" stroke-width="1.2"/><text x="473.40" y="437.6" font-size="10.57" fill="#000" stroke="#000" stroke-width="0.1" textLength="13.11" lengthAdjust="spacingAndGlyphs" >R1</text><text x="454.20" y="457" font-size="7.14" fill="#000" font-weight="bold" textLength="7.05" lengthAdjust="spacingAndGlyphs" >1k</text><rect x="454.6" y="459.6" width="27.8" height="7.8" fill="#c8c8b0" stroke="#8c1414" stroke-width="1.2"/><text x="473.40" y="456.6" font-size="10.57" fill="#000" stroke="#000" stroke-width="0.1" textLength="13.11" lengthAdjust="spacingAndGlyphs" >R2</text><text x="454.20" y="476" font-size="7.14" fill="#000" font-weight="bold" textLength="7.05" lengthAdjust="spacingAndGlyphs" >1k</text><rect x="454.6" y="478.6" width="27.8" height="7.8" fill="#c8c8b0" stroke="#8c1414" stroke-width="1.2"/><text x="473.40" y="475.6" font-size="10.57" fill="#000" stroke="#000" stroke-width="0.1" textLength="13.11" lengthAdjust="spacingAndGlyphs" >R3</text><text x="454.20" y="495" font-size="7.14" fill="#000" font-weight="bold" textLength="7.05" lengthAdjust="spacingAndGlyphs" >1k</text><rect x="454.6" y="498.6" width="27.8" height="7.8" fill="#c8c8b0" stroke="#8c1414" stroke-width="1.2"/><text x="473.40" y="495.6" font-size="10.57" fill="#000" stroke="#000" stroke-width="0.1" textLength="13.11" lengthAdjust="spacingAndGlyphs" >R4</text><text x="454.20" y="515" font-size="7.14" fill="#000" font-weight="bold" textLength="7.05" lengthAdjust="spacingAndGlyphs" >1k</text><rect x="454.6" y="517.6" width="27.8" height="7.8" fill="#c8c8b0" stroke="#8c1414" stroke-width="1.2"/><text x="473.40" y="514.6" font-size="10.57" fill="#000" stroke="#000" stroke-width="0.1" textLength="13.11" lengthAdjust="spacingAndGlyphs" >R5</text><text x="454.20" y="534" font-size="7.14" fill="#000" font-weight="bold" textLength="7.05" lengthAdjust="spacingAndGlyphs" >1k</text><rect x="454.6" y="536.6" width="27.8" height="7.8" fill="#c8c8b0" stroke="#8c1414" stroke-width="1.2"/><text x="473.40" y="533.6" font-size="10.57" fill="#000" stroke="#000" stroke-width="0.1" textLength="13.11" lengthAdjust="spacingAndGlyphs" >R6</text><text x="454.20" y="553" font-size="7.14" fill="#000" font-weight="bold" textLength="7.05" lengthAdjust="spacingAndGlyphs" >1k</text><text x="454.00" y="562" font-size="8.57" fill="#6e6e6e" textLength="29.03" lengthAdjust="spacingAndGlyphs" >&lt;TEXT&gt;</text><rect x="559.5" y="458.5" width="5" height="29" fill="#c8c8b0" stroke="#8c1414" stroke-width="1.1"/><path d="M578.5 454.5L564.5 467M564.5 479L578.5 492" stroke="#8c1414" stroke-width="1.1" fill="none"/><path d="M564.7 467.5L568.5 459.2L573.5 463.6Z" fill="#c8c8b0" stroke="#8c1414" stroke-width="1.1"/><text x="584.90" y="464.8" font-size="11.14" fill="#000" stroke="#000" stroke-width="0.1" textLength="14.71" lengthAdjust="spacingAndGlyphs" >Q2</text><text x="584.90" y="474.9" font-size="7.14" fill="#000" font-weight="bold" textLength="14.27" lengthAdjust="spacingAndGlyphs" >PNP</text><text x="584.20" y="485" font-size="8.00" fill="#6e6e6e" textLength="28.33" lengthAdjust="spacingAndGlyphs" >&lt;TEXT&gt;</text><text x="538.80" y="568" font-size="11.43" fill="#000" stroke="#000" stroke-width="0.1" textLength="27.32" lengthAdjust="spacingAndGlyphs" >LED 1</text><rect x="626.5" y="458.5" width="5" height="29" fill="#c8c8b0" stroke="#8c1414" stroke-width="1.1"/><path d="M645.5 454.5L631.5 467M631.5 479L645.5 492" stroke="#8c1414" stroke-width="1.1" fill="none"/><path d="M631.7 467.5L635.5 459.2L640.5 463.6Z" fill="#c8c8b0" stroke="#8c1414" stroke-width="1.1"/><text x="651.90" y="464.8" font-size="11.14" fill="#000" stroke="#000" stroke-width="0.1" textLength="14.71" lengthAdjust="spacingAndGlyphs" >Q3</text><text x="651.90" y="474.9" font-size="7.14" fill="#000" font-weight="bold" textLength="14.27" lengthAdjust="spacingAndGlyphs" >PNP</text><text x="651.20" y="485" font-size="8.00" fill="#6e6e6e" textLength="28.33" lengthAdjust="spacingAndGlyphs" >&lt;TEXT&gt;</text><text x="606.00" y="568" font-size="11.43" fill="#000" stroke="#000" stroke-width="0.1" textLength="27.32" lengthAdjust="spacingAndGlyphs" >LED 2</text><rect x="693.5" y="458.5" width="5" height="29" fill="#c8c8b0" stroke="#8c1414" stroke-width="1.1"/><path d="M713.5 454.5L698.5 467M698.5 479L713.5 492" stroke="#8c1414" stroke-width="1.1" fill="none"/><path d="M698.7 467.5L702.5 459.2L707.5 463.6Z" fill="#c8c8b0" stroke="#8c1414" stroke-width="1.1"/><text x="718.90" y="464.8" font-size="11.14" fill="#000" stroke="#000" stroke-width="0.1" textLength="14.71" lengthAdjust="spacingAndGlyphs" >Q4</text><text x="718.90" y="474.9" font-size="7.14" fill="#000" font-weight="bold" textLength="14.27" lengthAdjust="spacingAndGlyphs" >PNP</text><text x="718.20" y="485" font-size="8.00" fill="#6e6e6e" textLength="28.33" lengthAdjust="spacingAndGlyphs" >&lt;TEXT&gt;</text><text x="673.20" y="568" font-size="11.43" fill="#000" stroke="#000" stroke-width="0.1" textLength="27.32" lengthAdjust="spacingAndGlyphs" >LED 3</text><rect x="761.5" y="458.5" width="5" height="29" fill="#c8c8b0" stroke="#8c1414" stroke-width="1.1"/><path d="M780.5 454.5L766.5 467M766.5 479L780.5 492" stroke="#8c1414" stroke-width="1.1" fill="none"/><path d="M766.7 467.5L770.5 459.2L775.5 463.6Z" fill="#c8c8b0" stroke="#8c1414" stroke-width="1.1"/><text x="786.90" y="464.8" font-size="11.14" fill="#000" stroke="#000" stroke-width="0.1" textLength="14.71" lengthAdjust="spacingAndGlyphs" >Q5</text><text x="786.90" y="474.9" font-size="7.14" fill="#000" font-weight="bold" textLength="14.27" lengthAdjust="spacingAndGlyphs" >PNP</text><text x="786.20" y="485" font-size="8.00" fill="#6e6e6e" textLength="28.33" lengthAdjust="spacingAndGlyphs" >&lt;TEXT&gt;</text><text x="740.40" y="568" font-size="11.43" fill="#000" stroke="#000" stroke-width="0.1" textLength="27.32" lengthAdjust="spacingAndGlyphs" >LED 4</text><rect x="828.5" y="458.5" width="5" height="29" fill="#c8c8b0" stroke="#8c1414" stroke-width="1.1"/><path d="M847.5 454.5L833.5 467M833.5 479L847.5 492" stroke="#8c1414" stroke-width="1.1" fill="none"/><path d="M833.7 467.5L837.5 459.2L842.5 463.6Z" fill="#c8c8b0" stroke="#8c1414" stroke-width="1.1"/><text x="853.90" y="464.8" font-size="11.14" fill="#000" stroke="#000" stroke-width="0.1" textLength="14.71" lengthAdjust="spacingAndGlyphs" >Q6</text><text x="853.90" y="474.9" font-size="7.14" fill="#000" font-weight="bold" textLength="14.27" lengthAdjust="spacingAndGlyphs" >PNP</text><text x="853.20" y="485" font-size="8.00" fill="#6e6e6e" textLength="28.33" lengthAdjust="spacingAndGlyphs" >&lt;TEXT&gt;</text><text x="807.60" y="568" font-size="11.43" fill="#000" stroke="#000" stroke-width="0.1" textLength="27.32" lengthAdjust="spacingAndGlyphs" >LED 5</text><rect x="895.5" y="458.5" width="5" height="29" fill="#c8c8b0" stroke="#8c1414" stroke-width="1.1"/><path d="M914.5 454.5L900.5 467M900.5 479L914.5 492" stroke="#8c1414" stroke-width="1.1" fill="none"/><path d="M900.7 467.5L904.5 459.2L909.5 463.6Z" fill="#c8c8b0" stroke="#8c1414" stroke-width="1.1"/><text x="920.90" y="464.8" font-size="11.14" fill="#000" stroke="#000" stroke-width="0.1" textLength="14.71" lengthAdjust="spacingAndGlyphs" >Q7</text><text x="920.90" y="474.9" font-size="7.14" fill="#000" font-weight="bold" textLength="14.27" lengthAdjust="spacingAndGlyphs" >PNP</text><text x="920.20" y="485" font-size="8.00" fill="#6e6e6e" textLength="28.33" lengthAdjust="spacingAndGlyphs" >&lt;TEXT&gt;</text><text x="874.80" y="568" font-size="11.43" fill="#000" stroke="#000" stroke-width="0.1" textLength="27.32" lengthAdjust="spacingAndGlyphs" >LED 6</text><path d="M578.5 396.5L573.5 406.5H583.5Z" fill="none" stroke="#003c00" stroke-width="1.1"/><text x="569.30" y="391.6" font-size="13.57" fill="#000" textLength="23.86" lengthAdjust="spacingAndGlyphs" >+5V</text><path d="M567 577.2L568.2 576H925.8L927 577.2V579.8L925.8 581H568.2L567 579.8Z" fill="#0000c4"/>
</svg></body></html>
